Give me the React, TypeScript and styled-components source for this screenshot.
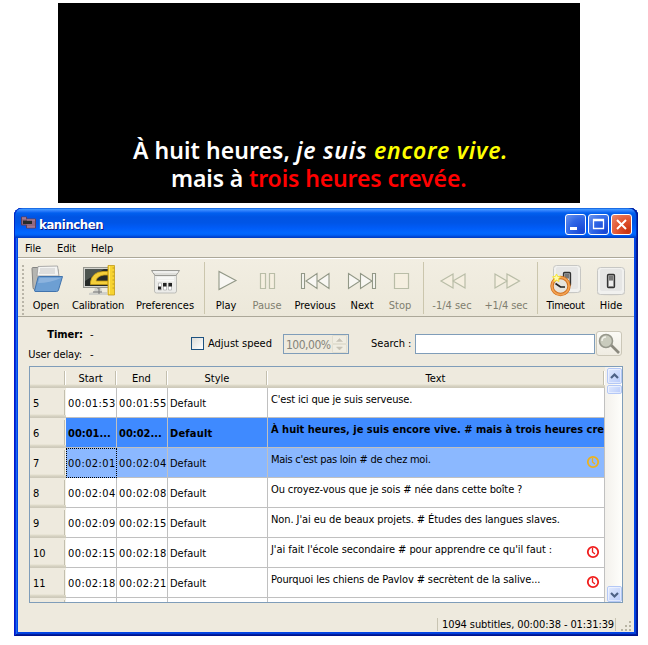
import React from 'react';
import styled, { createGlobalStyle, css } from 'styled-components';

const Global = createGlobalStyle`
  * { box-sizing: border-box; }
  body { margin: 0; background: #fff; overflow: hidden; }
`;

const ui = css`
  font-family: "DejaVu Sans Condensed", "DejaVu Sans", sans-serif;
  font-stretch: condensed;
  font-size: 11px;
  line-height: 14px;
  color: #000;
`;

const Screen = styled.div`
  ${ui}
  width: 648px;
  height: 645px;
  padding-top: 3px;
`;

const Subtitles = styled.div`
  margin-left: 58px;
  width: 522px;
  height: 200px;
  padding: 133px 0 0;
  background: #000;
  color: #fff;
  font: 600 23px/28px "Noto Sans", sans-serif;
  white-space: nowrap;
`;

const SubtitleLine = styled.div<{ $indent: number; $track: number }>`
  padding-left: ${p => p.$indent}px;
  letter-spacing: ${p => p.$track}px;
`;

const Tint = styled.span<{ $color?: string; $italic?: boolean }>`
  color: ${p => p.$color || 'inherit'};
  font-style: ${p => (p.$italic ? 'italic' : 'normal')};
  ${p => p.$italic && css`letter-spacing: 0.75px;`}
`;

const Window = styled.div`
  margin: 5px 0 0 14px;
  width: 624px;
  height: 428px;
  display: flex;
  flex-direction: column;
  border-radius: 8px 8px 0 0;
  padding: 0 4px 4px;
  background: #0144e8;
  box-shadow: inset 1px 0 #0019cf, inset -1px 0 #00138c, inset 0 -1px #00138c, inset 2px 0 #0831d9,
    inset -2px 0 #001ea0, inset 0 -2px #001ea0, inset 3px 0 #166aee, inset -3px 0 #0441d8, inset 0 -3px #0441d8;
`;

const TitleBar = styled.div`
  flex: none;
  height: 30px;
  margin: 0 -4px;
  padding: 5px 6px 0 7px;
  display: flex;
  border-radius: 8px 8px 0 0;
  background: linear-gradient(#0a58d8 0, #3d95ff 1.5px, #2a7bfb 3px, #0160ef 5px, #0054e3 9px, #0055e7 15px, #005cf8 20px, #0168ff 25px, #0061f6 27px, #0043cf 29px, #003dc0 30px);
  box-shadow: inset 1px 0 #0025c4, inset -1px 0 #00138c, inset -2px 0 #0030b8;
  & > svg { margin-top: 1px; }
`;

const Title = styled.div`
  flex: 1;
  padding: 3px 0 0 3px;
  font: bold 13px/18px "DejaVu Sans Condensed", sans-serif;
  letter-spacing: -0.4px;
  color: #fff;
  text-shadow: 1px 1px #0a1883;
`;

const Caption = styled.div<{ $close?: boolean }>`
  width: 21px;
  height: 21px;
  margin: 1px 0 0 2px;
  border: 1px solid #fff;
  border-radius: 3px;
  background: ${p =>
    p.$close
      ? 'radial-gradient(circle at 85% 85%, #c8320e, #e25531 50%, #e98a70)'
      : 'radial-gradient(circle at 85% 85%, #1746d4, #2f66e6 55%, #6e96ee)'};
  svg { display: block; }
`;

const Menu = styled.div`
  flex: none;
  height: 20px;
  padding: 4px 7px 0;
  display: flex;
  background: #eeeade;
  border-bottom: 1px solid #aca899;
`;

const MenuItem = styled.div<{ $w: number }>`
  width: ${p => p.$w}px;
  letter-spacing: -0.1px;
`;

const Toolbar = styled.div`
  flex: none;
  height: 59px;
  padding: 6px 0 0;
  display: flex;
  background: linear-gradient(#f2eee2, #ece8da);
  border-top: 1px solid #fff;
  border-bottom: 1px solid #aca899;
`;

const Grip = styled.div`
  width: 3px;
  height: 50px;
  margin: 0 1px 0 4px;
  background: radial-gradient(circle at 1px 1px, #b9b5a8 1px, transparent 1.4px) 0 0 / 3px 4px;
`;

const Tool = styled.div<{ $w: number; $off?: boolean; $track?: number }>`
  width: ${p => p.$w}px;
  display: flex;
  flex-direction: column;
  align-items: center;
  white-space: nowrap;
  color: ${p => (p.$off ? '#7f7e6f' : '#000')};
  letter-spacing: ${p => p.$track || 0}px;
  svg { flex: none; display: block; margin-bottom: 2px; overflow: visible; }
`;

const Separator = styled.div<{ $l: number; $r: number }>`
  width: 1px;
  height: 52px;
  margin: -3px ${p => p.$r}px 0 ${p => p.$l}px;
  background: #cbc6ad;
`;

const Client = styled.div`
  flex: 1;
  min-height: 0;
  padding: 0 11px;
  display: flex;
  flex-direction: column;
  background: #eeeade;
`;

const Controls = styled.div`
  flex: none;
  height: 49px;
  display: flex;
`;

const Timers = styled.div`
  width: 163px;
  padding-top: 11px;
  display: grid;
  grid-template-columns: 55px 1fr;
  column-gap: 6px;
  row-gap: 6px;
  align-content: start;
  text-align: right;
  white-space: nowrap;
  & > :nth-child(2n) { text-align: left; }
`;

const Strong = styled.b`
  letter-spacing: -0.05px;
  padding-right: 1px;
`;

const Delay = styled.span`
  justify-self: end;
  padding-right: 2px;
  letter-spacing: -0.15px;
`;

const CheckBox = styled.div`
  width: 13px;
  height: 13px;
  margin: 20px 4px 0 -1px;
  border: 1px solid #1c5180;
  background: linear-gradient(135deg, #dcdcd7, #fff);
`;

const FieldLabel = styled.div<{ $w: number }>`
  width: ${p => p.$w}px;
  padding-top: 20px;
  white-space: nowrap;
`;

const Spin = styled.div`
  width: 66px;
  height: 20px;
  margin-top: 17px;
  padding: 2px 1px 0 2px;
  display: flex;
  justify-content: space-between;
  border: 1px solid #7f9db9;
  font-size: 12px;
  line-height: 17px;
  letter-spacing: -0.5px;
  color: #85847a;
`;

const Arrows = styled.svg`
  width: 15px;
  height: 18px;
  margin-top: -2px;
  background: #f5f3ea;
`;

const SearchInput = styled.div`
  width: 180px;
  height: 20px;
  margin-top: 17px;
  border: 1px solid #7f9db9;
  background: #fff;
`;

const SearchButton = styled.div`
  width: 26px;
  height: 25px;
  margin: 14px 0 0 1px;
  border: 1px solid #cbc7b8;
  border-radius: 3px;
  background: linear-gradient(#fbfaf5, #efece2);
  svg { display: block; }
`;

const Table = styled.div`
  flex: none;
  width: 594px;
  height: 237px;
  display: flex;
  border: 1px solid #7f9db9;
  background: #fff;
`;

const Grid = styled.div`
  width: 575px;
  overflow: hidden;
`;

const Columns = css`
  display: grid;
  grid-template-columns: 36px 51px 51px 100px 337px;
`;

const HeaderRow = styled.div`
  ${Columns}
  height: 21px;
  background: linear-gradient(#eeeade 17px, #e2decd 18px, #d6d2c2 19px, #cbc7b8 21px);
`;

const HeaderCell = styled.div`
  height: 14px;
  margin: 4px 1px 0 0;
  line-height: 15px;
  text-align: center;
  border-right: 1px solid #c3bfae;
  box-shadow: 1px 0 #fff;
`;

const Row = styled.div<{ $bg?: string; $bold?: boolean }>`
  ${Columns}
  height: 30px;
  background: ${p => p.$bg || '#fff'};
  font-weight: ${p => (p.$bold ? 'bold' : 'normal')};
`;

const RowHead = styled.div`
  padding: 2px 1px 0 3px;
  font-weight: normal;
  background: linear-gradient(#eeeade 26px, #e2decd 27px, #d6d2c2 28px, #cbc7b8 30px);
  & > div { height: 25px; padding-top: 7px; border-right: 1px solid #c3bfae; box-shadow: 1px 0 #f5f3ea; }
`;

const Cell = styled.div<{ $track?: number; $focus?: boolean }>`
  padding: 9px 0 0 2px;
  border-right: 1px solid #c0c0c0;
  border-bottom: 1px solid #c0c0c0;
  white-space: nowrap;
  overflow: hidden;
  letter-spacing: ${p => p.$track || 0}px;
  ${p => p.$focus && css`outline: 1px dotted #000; outline-offset: -1px; border-right-color: transparent; border-bottom-color: transparent;`}
`;

const TextCell = styled(Cell)`
  padding: 5px 4px 0 3px;
  display: flex;
  justify-content: space-between;
  svg { flex: none; margin-top: 2px; }
`;

const ScrollBar = styled.div`
  width: 17px;
  display: flex;
  flex-direction: column;
  align-items: center;
  background: linear-gradient(90deg, #f3f1ec, #fefefb);
`;

const ScrollButton = styled.div<{ $h: number; $push?: boolean }>`
  width: 15px;
  height: ${p => p.$h}px;
  margin-top: ${p => (p.$push ? 'auto' : '1px')};
  margin-left: 1px;
  border: 1px solid #b4c8f6;
  border-radius: 2px;
  background: linear-gradient(135deg, #e1eafe, #b9cbfa);
  box-shadow: inset 0 0 0 0.5px #fff;
  svg { display: block; }
`;

const Status = styled.div`
  margin: 12px -11px 0 0;
  height: 17px;
  display: flex;
  justify-content: flex-end;
`;

const StatusText = styled.div`
  width: 179px;
  height: 13px;
  margin-top: 3px;
  padding-left: 4px;
  line-height: 13px;
  border-left: 1px solid #c8c4b2;
  border-right: 1px solid #c8c4b2;
  white-space: nowrap;
  letter-spacing: -0.1px;
`;

const Glyph = ({ children }: { children: React.ReactNode }) => (
  <svg width="32" height="32" viewBox="0 0 32 32">{children}</svg>
);

const line = { fill: '#f8f7f3', stroke: '#929887', strokeWidth: 1.1 };
const faint = { fill: '#f5efe0', stroke: '#b9bda7', strokeWidth: 1.2 };

const Plate = ({ x, y }: { x: number; y: number }) => (
  <g transform={`translate(${x} ${y})`}>
    <path d="M0 25h28v2q-14 3-28 0z" fill="#ddd9cf" />
    <rect x=".5" y=".5" width="27" height="27" rx="3" fill="#f1f1ef" stroke="#c7c7c4" />
    <rect x="3" y="2" width="22" height="22" rx="2" fill="#e6e6e5" />
    <rect x="10.5" y="7.5" width="7" height="13" rx="1" fill="#aaa" stroke="#333" strokeWidth="1.3" />
    <path d="M12 9h4v4h-4z" fill="#777" />
    <path d="M12 14h4v5h-4z" fill="#eee" />
  </g>
);

const OpenIcon = () => (
  <Glyph>
    <path d="M2 3.500q0-1 1-1h6l1 2h18v20H5q-2 0-2-2z" fill="#b5b5b1" stroke="#858583" />
    <path d="M8 1.500l19.500-.500 1.500 10H7z" fill="#f4f4f2" stroke="#999" strokeWidth=".8" />
    <path d="M10 4h15M10 6h15M9 8h16" stroke="#c8c8c8" />
    <path d="M4.500 26L8 12.500q.3-1 1.300-1H32.500L28.500 25q-.4 1.500-2 1.500H5z" fill="#6d9fd3" stroke="#4274ad" />
    <path d="M8 18Q20 18 31 13H9.500z" fill="#a1c2e6" opacity=".6" />
  </Glyph>
);

const CalibrationIcon = () => (
  <Glyph>
    <path d="M13 22h6l1 5h5v3H7v-2l5-1z" fill="#d0d0ca" />
    <path d="M15 23h2v6M11 27h9" stroke="#777" fill="none" />
    <rect x="1.500" y="2.500" width="27" height="20" fill="#d4d4cf" stroke="#96968f" />
    <path d="M3 4h23v17H3z" fill="#262a28" />
    <path d="M3 4h19L3 16z" fill="#4d544f" />
    <path d="M8.500 19.500V17Q10 7 21 6.500h5V10h-4q-7 1-8 6h12v3.500z" fill="#f5cf3a" stroke="#c39a14" strokeWidth=".8" />
    <path d="M26 .5h6.500v29.500H26z" fill="#f7d330" stroke="#c39a14" strokeWidth=".8" />
    <path d="M30.500 3h2M30.500 7h2M30.500 11h2M30.500 15h2M30.500 19h2M30.500 23h2" stroke="#c09c20" />
    <path d="M27.500 1v28" stroke="#fbe678" />
  </Glyph>
);

const PreferencesIcon = () => (
  <Glyph>
    <path d="M5.500 10h22v16q0 2-2 2h-18q-2 0-2-2z" fill="#ecece9" stroke="#bdbdb8" />
    <path d="M2.500 5.500h28L27 10.500H6z" fill="#dededa" stroke="#9a9a95" />
    <path d="M4 7h25" stroke="#fff" />
    <path d="M8 13h17M8 15.500h17" stroke="#fafaf9" strokeWidth="1.5" />
    <path d="M9.500 18h3v7h-3zM14.500 18h3v7h-3zM19.500 18h3v7h-3z" fill="#fff" stroke="#aaa" strokeWidth=".7" />
    <path d="M9 21.500h3v3H9zM14 18h3.500v3.500H14zM19.500 18H23v3.500h-3.500z" fill="#222" />
  </Glyph>
);

const TimeoutIcon = () => (
  <Glyph>
    <Plate x={3} y={0} />
    <circle cx="10.500" cy="21" r="8.500" fill="#e6e4dd" stroke="#d0701f" strokeWidth="3.400" />
    <circle cx="10.500" cy="21" r="8.600" fill="none" stroke="#f3a353" strokeWidth="1.700" />
    <path d="M5.500 18.500l5 3.500h4.500" stroke="#222" strokeWidth="1.700" fill="none" />
    <path d="M6.500 9l1.200 2.500 2.800.300-2 2 .5 2.700-2.500-1.300L4 16.500l.5-2.700-2-2 2.800-.3z" fill="#fffbb0" stroke="#f6e634" />
  </Glyph>
);

const Clock = ({ color }: { color: string }) => (
  <svg width="14" height="14" viewBox="0 0 14 14" fill="none" stroke={color} strokeWidth="1.8">
    <circle cx="7" cy="7" r="5.200" />
    <path d="M6.500 3v4l2.500 2" strokeWidth="1.300" />
  </svg>
);

type Sub = { n: number; start: string; end: string; text: string; mark?: string; bg?: string; bold?: boolean; focus?: boolean; track: number };

const subs: Sub[] = [
  { n: 5, start: '00:01:53', end: '00:01:55', text: "C'est ici que je suis serveuse.", track: -0.16 },
  { n: 6, start: '00:01...', end: '00:02...', text: 'À huit heures, je suis encore vive. # mais à trois heures crevée.', bg: '#3f8aff', bold: true, track: 0 },
  { n: 7, start: '00:02:01', end: '00:02:04', text: "Mais c'est pas loin # de chez moi.", bg: '#8bb8ff', mark: '#eeb21c', focus: true, track: -0.26 },
  { n: 8, start: '00:02:04', end: '00:02:08', text: 'Ou croyez-vous que je sois # née dans cette boîte ?', track: -0.12 },
  { n: 9, start: '00:02:09', end: '00:02:15', text: "Non. J'ai eu de beaux projets. # Études des langues slaves.", track: -0.09 },
  { n: 10, start: '00:02:15', end: '00:02:18', text: "J'ai fait l'école secondaire # pour apprendre ce qu'il faut :", mark: '#f01c1c', track: -0.07 },
  { n: 11, start: '00:02:18', end: '00:02:21', text: 'Pourquoi les chiens de Pavlov # secrètent de la salive...', mark: '#f01c1c', track: -0.12 },
];

export default function App() {
  return (
    <Screen>
      <Global />
      <Subtitles>
        <SubtitleLine $indent={75} $track={0.05}>
          À huit heures, <Tint $italic>je suis </Tint><Tint $italic $color="#ff0">encore vive.</Tint>
        </SubtitleLine>
        <SubtitleLine $indent={113} $track={-0.12}>
          mais à <Tint $color="#f00">trois heures crevée.</Tint>
        </SubtitleLine>
      </Subtitles>
      <Window>
        <TitleBar>
          <svg width="15" height="18" viewBox="0 0 15 18">
            <path d="M.5 3h5v2h9v9h-9v-3h-5z" fill="#916982" stroke="#5d3f5a" />
            <path d="M2 6.500h9v3.500H2z" fill="#262b2c" />
            <path d="M1 4h4M6 6h8M6 13h8" stroke="#b088a4" />
          </svg>
          <Title>kaninchen</Title>
          <Caption><svg width="19" height="19"><path d="M4 12h7v3H4z" fill="#fff" /></svg></Caption>
          <Caption><svg width="19" height="19"><path d="M4.500 4.500h10v9h-10zM4 5.500h11" fill="none" stroke="#fff" strokeWidth="1.300" /></svg></Caption>
          <Caption $close><svg width="19" height="19"><path d="M5 5l9 9M14 5l-9 9" stroke="#fff" strokeWidth="2" /></svg></Caption>
        </TitleBar>
        <Menu>
          <MenuItem $w={32}>File</MenuItem>
          <MenuItem $w={34}>Edit</MenuItem>
          <MenuItem $w={40}>Help</MenuItem>
        </Menu>
        <Toolbar>
          <Grip />
          <Tool $w={40}><OpenIcon />Open</Tool>
          <Tool $w={64} $track={-0.15}><CalibrationIcon />Calibration</Tool>
          <Tool $w={70}><PreferencesIcon />Preferences</Tool>
          <Separator $l={4} $r={4} />
          <Tool $w={34}><Glyph><path d="M9 6.500v18L26 15.500z" {...line} /></Glyph>Play</Tool>
          <Tool $w={48} $off><Glyph><path d="M9.500 8.500h5v15h-5zM18.500 8.500h5v15h-5z" {...faint} /></Glyph>Pause</Tool>
          <Tool $w={48} $track={-0.1}><Glyph><path d="M2.500 8.500h3v15h-3zM18 8.500v15L7 16zM30 8.500v15L19 16z" {...line} /></Glyph>Previous</Tool>
          <Tool $w={46}><Glyph><path d="M26.500 8.500h3v15h-3zM2.500 8.500v15L14 16zM14.500 8.500v15L26 16z" {...line} /></Glyph>Next</Tool>
          <Tool $w={30} $off><Glyph><path d="M10.500 8.500h14v15h-14z" {...faint} /></Glyph>Stop</Tool>
          <Separator $l={8} $r={3} />
          <Tool $w={50} $off><Glyph><path d="M17 9v14L5 16zM29 9v14L17 16z" {...faint} /></Glyph>-1/4 sec</Tool>
          <Tool $w={58} $off $track={-0.1}><Glyph><path d="M5 9v14L17 16zM17 9v14L29.500 16z" {...faint} /></Glyph>+1/4 sec</Tool>
          <Separator $l={2} $r={2} />
          <Tool $w={51} $track={-0.35}><TimeoutIcon />Timeout</Tool>
          <Tool $w={40}><Glyph><Plate x={2} y={2} /></Glyph>Hide</Tool>
        </Toolbar>
        <Client>
          <Controls>
            <Timers>
              <Strong>Timer:</Strong><span>-</span>
              <Delay>User delay:</Delay><span>-</span>
            </Timers>
            <CheckBox />
            <FieldLabel $w={75}>Adjust speed</FieldLabel>
            <Spin>
              100,00%
              <Arrows viewBox="0 0 15 18">
                <path d="M.5.500h14v8H.5zM.5 9.500h14v8H.5z" fill="#f0ede2" stroke="#e2dfd1" />
                <path d="M4.500 6.500h6L7.500 3.500zM4.500 12h6l-3 3z" fill="#c7c3b6" stroke="#c7c3b6" strokeWidth=".5" />
              </Arrows>
            </Spin>
            <FieldLabel $w={22} />
            <FieldLabel $w={44}>Search :</FieldLabel>
            <SearchInput />
            <SearchButton>
              <svg width="24" height="23">
                <path d="M14 13l8 8" stroke="#8b897e" strokeWidth="2.600" />
                <circle cx="9" cy="9" r="6.500" fill="#c9cbbd" stroke="#96978b" strokeWidth="1.600" />
                <path d="M5 9q0-4 4-4" stroke="#f2f2ea" strokeWidth="1.500" fill="none" />
              </svg>
            </SearchButton>
          </Controls>
          <Table>
            <Grid>
              <HeaderRow>
                {['', 'Start', 'End', 'Style', 'Text'].map(t => <HeaderCell key={t}>{t}</HeaderCell>)}
              </HeaderRow>
              {subs.map(s => (
                <Row key={s.n} $bg={s.bg} $bold={s.bold}>
                  <RowHead><div>{s.n}</div></RowHead>
                  <Cell $focus={s.focus} $track={s.bold ? 0 : 0.4}>{s.start}</Cell>
                  <Cell $track={s.bold ? 0 : 0.4}>{s.end}</Cell>
                  <Cell $track={s.bold ? 0.2 : 0}>Default</Cell>
                  <TextCell $track={s.track}><span>{s.text}</span>{s.mark && <Clock color={s.mark} />}</TextCell>
                </Row>
              ))}
              <Row><RowHead><div /></RowHead><Cell /><Cell /><Cell /><TextCell /></Row>
            </Grid>
            <ScrollBar>
              <ScrollButton $h={16}><svg width="13" height="14"><path d="M3 9l3.500-3.500L10 9" fill="none" stroke="#4d6185" strokeWidth="2.200" /></svg></ScrollButton>
              <ScrollButton $h={9} />
              <ScrollButton $h={16} $push><svg width="13" height="14"><path d="M3 6l3.500 3.500L10 6" fill="none" stroke="#4d6185" strokeWidth="2.200" /></svg></ScrollButton>
            </ScrollBar>
          </Table>
          <Status>
            <StatusText>1094 subtitles, 00:00:38 - 01:31:39</StatusText>
            <svg width="18" height="17"><path d="M13 6h2v2h-2zM9 10h2v2H9zM13 10h2v2h-2zM5 14h2v2H5zM9 14h2v2H9zM13 14h2v2h-2z" fill="#b8b4a3" /></svg>
          </Status>
        </Client>
      </Window>
    </Screen>
  );
}
